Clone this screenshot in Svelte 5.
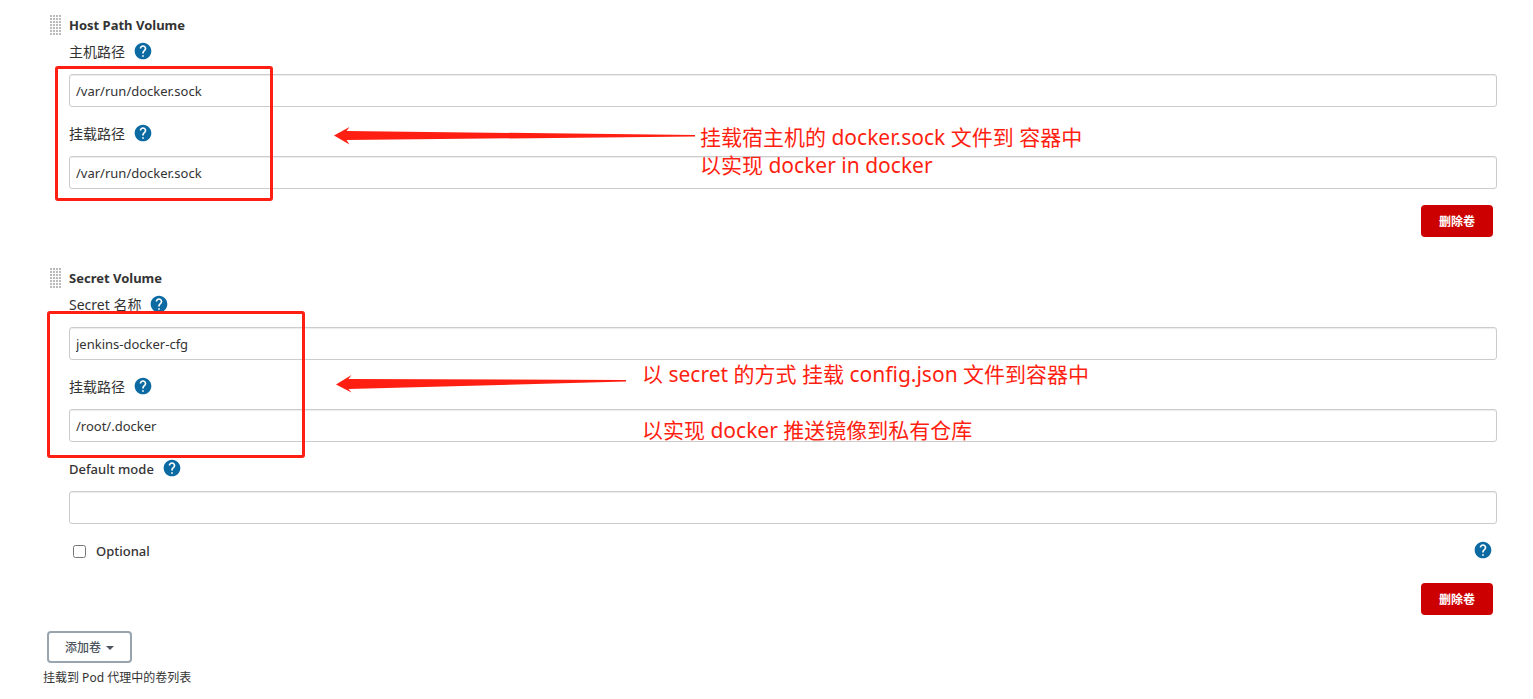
<script lang="ts">
  let hostPath = $state('/var/run/docker.sock');
  let hostMount = $state('/var/run/docker.sock');
  let secretName = $state('jenkins-docker-cfg');
  let secretMount = $state('/root/.docker');
  let defaultMode = $state('');
  let optional = $state(false);
</script>

{#snippet help(name: string)}
  <button type="button" class="help" aria-label={name}>
    <svg viewBox="0 0 24 24" width="20" height="20" aria-hidden="true">
      <path
        fill="#0b6aa2"
        d="M12 2C6.48 2 2 6.48 2 12s4.48 10 10 10 10-4.48 10-10S17.52 2 12 2zm1 17h-2v-2h2v2zm2.07-7.75-.9.92C13.45 12.9 13 13.5 13 15h-2v-.5c0-1.1.45-2.1 1.17-2.83l1.24-1.26c.37-.36.59-.86.59-1.41 0-1.1-.9-2-2-2s-2 .9-2 2H8c0-2.21 1.79-4 4-4s4 1.79 4 4c0 .88-.36 1.68-.93 2.25z"
      />
    </svg>
  </button>
{/snippet}

<main class="page">
  <section class="volume">
    <header class="title"><span class="grip"></span><h2>Host Path Volume</h2></header>
    <div class="fields">
      <div class="field">
        <div class="caption"><label for="host-path">主机路径</label>{@render help('主机路径')}</div>
        <input id="host-path" type="text" bind:value={hostPath} />
      </div>
      <div class="field">
        <div class="caption"><label for="host-mount">挂载路径</label>{@render help('挂载路径')}</div>
        <input id="host-mount" type="text" bind:value={hostMount} />
      </div>
      <button type="button" class="delete">删除卷</button>
    </div>
    <div class="frame frame-host"></div>
    <svg class="arrow arrow-host" width="362" height="18" viewBox="0 0 362 18" aria-hidden="true">
      <path fill="#ff1f12" d="M0 8.5 L15.500 0 L12.500 4 L361 8 V9.500 L12.500 13 L15.500 17.500 Z" />
    </svg>
    <p class="note note-host">挂载宿主机的 docker.sock 文件到 容器中<br />以实现 docker in docker</p>
  </section>

  <section class="volume">
    <header class="title"><span class="grip"></span><h2>Secret Volume</h2></header>
    <div class="fields">
      <div class="field">
        <div class="caption"><label for="secret-name">Secret 名称</label>{@render help('Secret 名称')}</div>
        <input id="secret-name" type="text" bind:value={secretName} />
      </div>
      <div class="field">
        <div class="caption"><label for="secret-mount">挂载路径</label>{@render help('挂载路径')}</div>
        <input id="secret-mount" type="text" bind:value={secretMount} />
      </div>
      <div class="field">
        <div class="caption"><label class="medium" for="default-mode">Default mode</label>{@render help('Default mode')}</div>
        <input id="default-mode" type="text" bind:value={defaultMode} />
      </div>
      <div class="option">
        <input id="optional" type="checkbox" bind:checked={optional} />
        <label class="medium" for="optional">Optional</label>
        {@render help('Optional')}
      </div>
      <button type="button" class="delete">删除卷</button>
    </div>
    <div class="frame frame-secret"></div>
    <svg class="arrow arrow-secret" width="290" height="18" viewBox="0 0 290 18" aria-hidden="true">
      <path fill="#ff1f12" d="M0 9.500 L15.500 0 L12.500 4 L290 5 V6.500 L12.500 14 L15.500 17.500 Z" />
    </svg>
    <p class="note note-secret">以 secret 的方式 挂载 config.json 文件到容器中<br /><br />以实现 docker 推送镜像到私有仓库</p>
  </section>

  <footer>
    <button type="button" class="add">添加卷<span class="caret"></span></button>
    <p class="hint">挂载到 Pod 代理中的卷列表</p>
  </footer>
</main>

<style>
  :global(body) {
    margin: 0;
    background: #fff;
  }
  .page {
    padding: 15px 36px 0 43px;
    color: #333;
    font: 14px/22px 'Noto Sans', 'Noto Sans CJK SC', sans-serif;
  }
  .volume {
    position: relative;
    margin-bottom: 31px;
  }
  .volume:nth-of-type(2) {
    margin-bottom: 16px;
  }
  .title {
    display: flex;
    align-items: center;
    gap: 8px;
    height: 20px;
    padding-left: 7px;
    margin-bottom: 6px;
  }
  .grip {
    width: 11px;
    height: 20px;
    background: radial-gradient(circle at 1px 1px, #bbb 1px, transparent 1px) 0 0 / 3px 3px;
  }
  h2 {
    margin: 0;
    font-size: 13px;
    line-height: 20px;
    font-weight: 700;
  }
  .fields {
    display: flex;
    flex-direction: column;
    gap: 16px;
    padding-left: 26px;
  }
  .field {
    display: flex;
    flex-direction: column;
    gap: 11px;
  }
  .caption {
    display: flex;
    align-items: center;
    gap: 8px;
    height: 22px;
  }
  .medium {
    font-size: 13px;
    font-weight: 500;
  }
  .help {
    display: flex;
    padding: 0;
    border: 0;
    background: none;
    margin-bottom: 2px;
    cursor: pointer;
  }
  input[type='text'] {
    box-sizing: border-box;
    width: 100%;
    height: 33px;
    padding: 0 6px;
    border: 1px solid #ccc;
    border-radius: 3px;
    box-shadow: inset 0 1px 1px rgba(0, 0, 0, 0.075);
    background: #fff;
    color: #333;
    font: inherit;
    font-size: 13px;
  }
  .option {
    display: flex;
    align-items: center;
    height: 22px;
    padding: 0 4px 5px;
  }
  .option input {
    width: 13px;
    height: 13px;
    margin: 0 10px 0 0;
  }
  .option .help {
    margin-left: auto;
  }
  .delete {
    align-self: flex-end;
    width: 72px;
    height: 32px;
    margin-right: 4px;
    padding: 2px 0 0;
    border: 0;
    border-radius: 4px;
    background: #c00;
    color: #fff;
    font: 700 12px/18px 'Noto Sans', 'Noto Sans CJK SC', sans-serif;
  }
  .add {
    display: flex;
    align-items: center;
    gap: 5px;
    height: 32px;
    margin-left: 4px;
    padding: 2px 16px 0;
    border: 2px solid #98a5af;
    border-radius: 4px;
    background: #fff;
    color: #4d545d;
    font: 500 12px/18px 'Noto Sans', 'Noto Sans CJK SC', sans-serif;
  }
  .caret {
    border: 4px solid transparent;
    border-top-color: #4d545d;
    border-bottom: 0;
  }
  .hint {
    margin: 6px 0 0;
    font-size: 12px;
    line-height: 18px;
  }
  .frame {
    position: absolute;
    box-sizing: border-box;
    border: 3px solid #ff1f12;
    border-radius: 3px;
    pointer-events: none;
  }
  .frame-host {
    left: 12px;
    top: 51px;
    width: 218px;
    height: 135px;
  }
  .frame-secret {
    left: 4px;
    top: 43px;
    width: 258px;
    height: 147px;
  }
  .arrow {
    position: absolute;
    pointer-events: none;
  }
  .arrow-host {
    left: 291px;
    top: 112px;
  }
  .arrow-secret {
    left: 293px;
    top: 107px;
  }
  .note {
    position: absolute;
    margin: 0;
    color: #ff1f12;
    font-size: 21px;
    line-height: 28px;
    white-space: nowrap;
    pointer-events: none;
  }
  .note-host {
    left: 657px;
    top: 108px;
  }
  .note-secret {
    left: 599px;
    top: 92px;
  }
</style>
